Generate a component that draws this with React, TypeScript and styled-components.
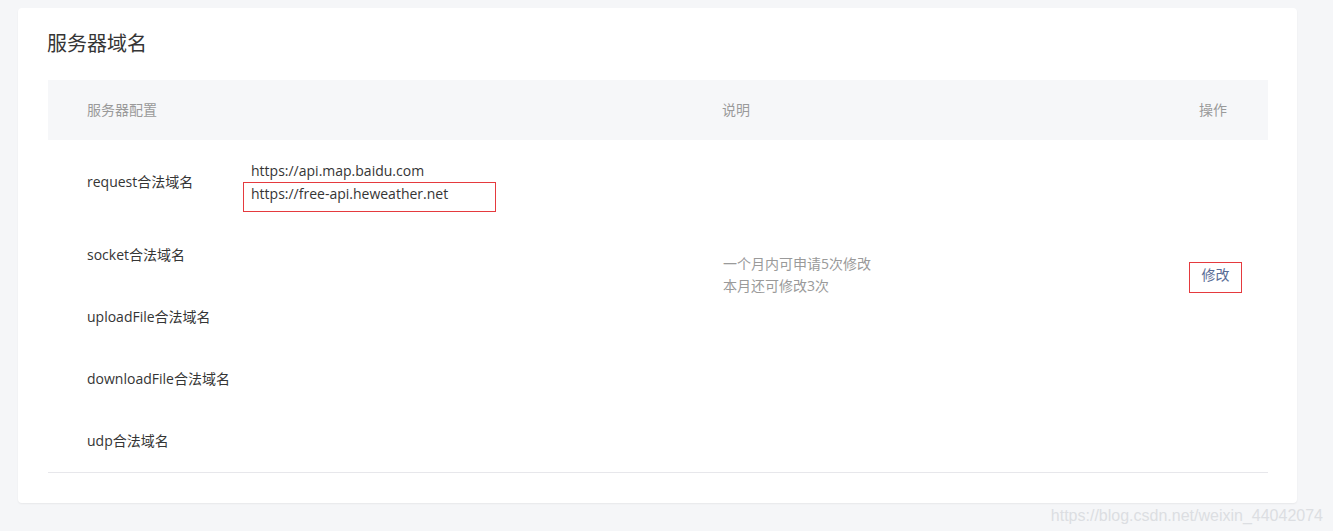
import styled, { createGlobalStyle } from "styled-components";

const GlobalStyle = createGlobalStyle`
  html, body {
    margin: 0;
    padding: 0;
    background: #f5f6f8;
  }
  body {
    font-family: "Open Sans", "Noto Sans CJK SC", sans-serif;
    color: #353535;
  }
`;

const domains = [
  {
    name: "request合法域名",
    urls: ["https://api.map.baidu.com", "https://free-api.heweather.net"],
    marked: 1,
  },
  { name: "socket合法域名", urls: [] },
  { name: "uploadFile合法域名", urls: [] },
  { name: "downloadFile合法域名", urls: [] },
  { name: "udp合法域名", urls: [] },
];

const App = () => {
  return (
    <Page>
      <GlobalStyle />
      <Card>
        <Title>服务器域名</Title>
        <Table>
          <HeadRow>
            <HeadCell>服务器配置</HeadCell>
            <HeadCell>说明</HeadCell>
            <HeadCell align="right">操作</HeadCell>
          </HeadRow>
          <BodyRow>
            <DomainList>
              {domains.map((d) => (
                <DomainItem key={d.name}>
                  <DomainLabel>{d.name}</DomainLabel>
                  <UrlList>
                    {d.urls.map((u, i) => (
                      <Url key={u} marked={d.marked === i}>
                        {u}
                      </Url>
                    ))}
                  </UrlList>
                </DomainItem>
              ))}
            </DomainList>
            <DescCell>
              一个月内可申请5次修改
              <br />
              本月还可修改3次
            </DescCell>
            <OpCell>
              <EditButton>修改</EditButton>
            </OpCell>
          </BodyRow>
        </Table>
      </Card>
      <Watermark>https://blog.csdn.net/weixin_44042074</Watermark>
    </Page>
  );
};

const Page = styled.div`
  padding-top: 8px;
`;

const Card = styled.div`
  margin: 0 36px 0 18px;
  background: #fff;
  border-radius: 4px;
  box-shadow: 0 1px 2px rgba(0, 0, 0, 0.06);
  padding: 22px 29px 30px 30px;
`;

const Title = styled.h2`
  margin: 0 0 22px -1px;
  font-size: 20px;
  font-weight: 400;
  line-height: 28px;
  color: #353535;
`;

const Table = styled.div`
  border-bottom: 1px solid #e7e7eb;
`;

const HeadRow = styled.div`
  display: grid;
  grid-template-columns: 635px 1fr 200px;
  height: 60px;
  padding-bottom: 2px;
  box-sizing: border-box;
  align-items: center;
  background: #f6f7f9;
`;

const HeadCell = styled.div<{ align?: string }>`
  padding: 0 41px 0 39px;
  font-size: 14px;
  color: #9a9a9a;
  text-align: ${({ align }) => align || "left"};
`;

const BodyRow = styled.div`
  display: grid;
  grid-template-columns: 635px 1fr 200px;
`;

const DomainList = styled.div`
  display: flex;
  flex-direction: column;
  padding-left: 39px;
`;

const DomainItem = styled.div`
  display: flex;
  align-items: center;
  padding: 19px 0;
  min-height: 24px;
  font-size: 14px;
  line-height: 23px;
`;

const DomainLabel = styled.div`
  width: 164px;
  flex-shrink: 0;
  line-height: 24px;
`;

const UrlList = styled.div`
  display: flex;
  flex-direction: column;
`;

const Url = styled.div<{ marked?: boolean }>`
  position: relative;

  &::after {
    content: "";
    display: ${({ marked }) => (marked ? "block" : "none")};
    position: absolute;
    left: -8px;
    top: 0;
    width: 251px;
    height: 28px;
    border: 1px solid #e53a3e;
  }
`;

const DescCell = styled.div`
  align-self: center;
  padding: 0 0 62px 40px;
  font-size: 14px;
  line-height: 22px;
  color: #9a9a9a;
`;

const OpCell = styled.div`
  display: flex;
  justify-content: flex-end;
  align-items: center;
  padding: 5px 26px 62px 0;
`;

const EditButton = styled.button`
  width: 53px;
  height: 31px;
  padding: 0 0 7px;
  background: #fff;
  border: 1px solid #e53a3e;
  border-radius: 0;
  font-family: inherit;
  font-size: 14px;
  color: #576b95;
  cursor: pointer;
`;

const Watermark = styled.div`
  padding: 2px 10px 0 0;
  text-align: right;
  font-family: "Liberation Sans", sans-serif;
  font-size: 16px;
  line-height: 22px;
  color: #dcdee2;
`;

export default App;
